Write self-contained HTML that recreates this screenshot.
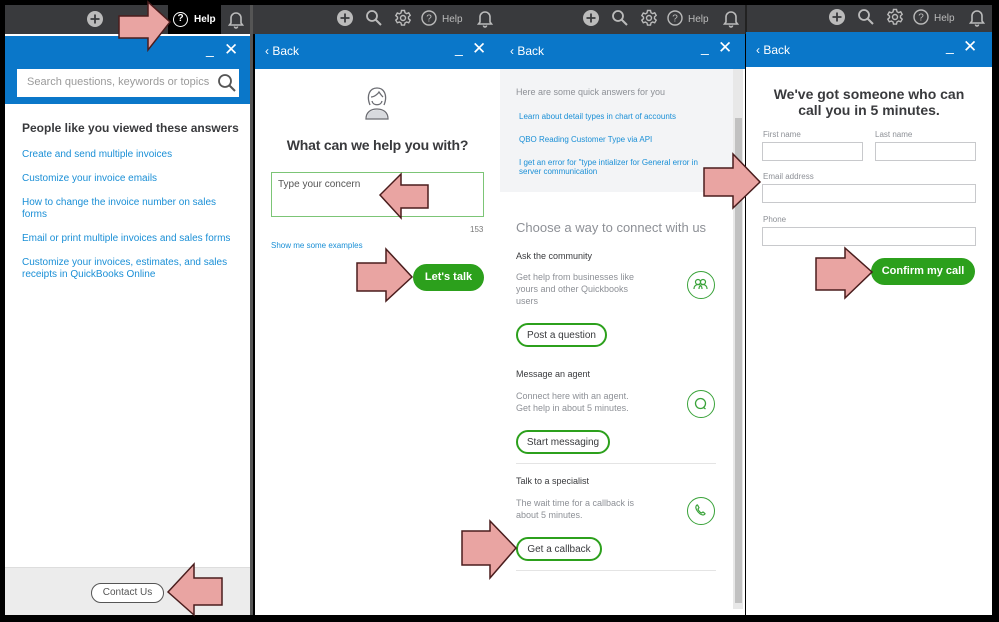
<!DOCTYPE html>
<html><head><meta charset="utf-8"><style>
*{box-sizing:border-box;margin:0;padding:0}
body{width:999px;height:622px;background:#000;position:relative;overflow:hidden;font-family:"Liberation Sans",sans-serif}
.a{position:absolute}
.top{background:#393a3d;height:29px;top:5px}
.blue{background:#0a77c9}
.pan{background:#fff;top:34px;height:581px}
.lnk{color:#1a8fd6;font-size:10px;position:absolute}
.gray{color:#8d9096}
.btn{position:absolute;border:2px solid #2ca01c;border-radius:13px;font-size:10px;color:#393a3d;background:#fff;display:flex;align-items:center;justify-content:center}
.circ{position:absolute;width:28px;height:28px;border:1.5px solid #3aa33a;border-radius:50%}
.inp{position:absolute;border:1px solid #c8c9cc;height:19px;background:#fff}
.lbl{position:absolute;font-size:8px;color:#8d9096}
.hd{color:#fff;font-size:12px;position:absolute}
</style></head><body>
<svg width="0" height="0" style="position:absolute"><defs>
<g id="plus"><circle cx="9" cy="9" r="8" fill="#bbb"/><path d="M9 4.5V13.5M4.5 9H13.5" stroke="#393a3d" stroke-width="1.8"/></g>
<g id="mag"><circle cx="7" cy="7" r="5" fill="none" stroke="#bbb" stroke-width="1.8"/><path d="M10.5 10.5L16 16" stroke="#bbb" stroke-width="2"/></g>
<g id="gear" fill="none" stroke="#bbb" stroke-width="1.4"><circle cx="9" cy="9" r="2.5"/><path d="M7.5 1.5h3l.5 2.2 1.6.9 2.1-.8 1.5 2.6-1.7 1.5v1.8l1.7 1.5-1.5 2.6-2.1-.8-1.6.9-.5 2.2h-3l-.5-2.2-1.6-.9-2.1.8-1.5-2.6 1.7-1.5V8.1L1.8 6.6l1.5-2.6 2.1.8 1.6-.9z"/></g>
<g id="bell" fill="none" stroke="#bbb" stroke-width="1.6"><path d="M4 13V8a5 5 0 0 1 10 0v5l1.5 2h-13z"/><path d="M7.5 16.5a1.5 1.5 0 0 0 3 0"/></g>
<g id="q"><circle cx="8" cy="8" r="7" fill="none" stroke="#bbb" stroke-width="1.4"/><text x="8" y="11.5" font-size="10" text-anchor="middle" fill="#bbb" font-family="Liberation Sans">?</text></g>
</defs></svg>
<!-- top bars -->
<div class="a top" style="left:5px;width:245px"></div>
<div class="a" style="left:168px;top:5px;width:53px;height:29px;background:#000"></div>
<div class="a top" style="left:253px;width:992px"></div>
<div class="a" style="left:250px;top:5px;width:3px;height:610px;background:#555"></div>
<div class="a" style="left:745px;top:5px;width:2px;height:29px;background:#222"></div>
<div class="a" style="left:992px;top:0;width:7px;height:622px;background:#000"></div>

<!-- panel 1 -->
<div class="a pan" style="left:5px;width:245px"></div>
<div class="a blue" style="left:5px;top:36px;width:245px;height:68px"></div>
<div class="a" style="left:17px;top:69px;width:222px;height:28px;background:#fff"></div>
<div class="a" style="left:27px;top:76px;font-size:11px;color:#9a9a9a">Search questions, keywords or topics</div>
<svg class="a" style="left:216px;top:72px" width="22" height="22"><circle cx="9" cy="9" r="6" fill="none" stroke="#555" stroke-width="1.8"/><line x1="13.5" y1="13.5" x2="19" y2="19" stroke="#555" stroke-width="2"/></svg>
<div class="hd" style="left:206px;top:41px;font-size:14px">_</div><div class="hd" style="left:224px;top:40px;font-size:17px">✕</div>
<div class="a" style="left:22px;top:121px;font-size:12px;font-weight:bold;color:#393a3d">People like you viewed these answers</div>
<div class="lnk" style="left:22px;top:149px">Create and send multiple invoices</div>
<div class="lnk" style="left:22px;top:173px">Customize your invoice emails</div>
<div class="lnk" style="left:22px;top:197px;width:200px;line-height:12px">How to change the invoice number on sales forms</div>
<div class="lnk" style="left:22px;top:233px">Email or print multiple invoices and sales forms</div>
<div class="lnk" style="left:22px;top:257px;width:222px;line-height:12px">Customize your invoices, estimates, and sales receipts in QuickBooks Online</div>
<div class="a" style="left:5px;top:567px;width:245px;height:48px;background:#ececec;border-top:1px solid #ddd"></div>
<div class="a" style="left:91px;top:583px;width:73px;height:20px;border:1.5px solid #555;border-radius:10px;background:#fff;font-size:10px;color:#555;text-align:center;line-height:17px">Contact Us</div>
<svg class="a" style="left:86px;top:10px" width="18" height="18"><use href="#plus"/></svg>
<div class="a" style="left:173px;top:12px;width:15px;height:15px;border:1.5px solid #fff;border-radius:50%;color:#fff;font-size:10px;text-align:center;line-height:12px;font-weight:bold">?</div>
<div class="a" style="left:194px;top:14px;color:#fff;font-size:10px;font-weight:bold">Help</div>
<svg class="a" style="left:227px;top:10px" width="18" height="19"><use href="#bell"/></svg>

<!-- top icons panels 2-4 -->
<svg class="a" style="left:336px;top:9px" width="160" height="20"><use href="#plus"/><use href="#mag" x="29"/><use href="#gear" x="58"/><use href="#q" x="85" y="1"/><text x="106" y="13" font-size="10" fill="#bbb" font-family="Liberation Sans">Help</text><use href="#bell" x="140"/></svg>
<svg class="a" style="left:582px;top:9px" width="160" height="20"><use href="#plus"/><use href="#mag" x="29"/><use href="#gear" x="58"/><use href="#q" x="85" y="1"/><text x="106" y="13" font-size="10" fill="#bbb" font-family="Liberation Sans">Help</text><use href="#bell" x="140"/></svg>
<svg class="a" style="left:828px;top:8px" width="160" height="20"><use href="#plus"/><use href="#mag" x="29"/><use href="#gear" x="58"/><use href="#q" x="85" y="1"/><text x="106" y="13" font-size="10" fill="#bbb" font-family="Liberation Sans">Help</text><use href="#bell" x="140"/></svg>

<!-- panel 2 -->
<div class="a pan" style="left:255px;width:245px"></div>
<div class="a blue" style="left:255px;top:34px;width:245px;height:35px"></div>
<div class="hd" style="left:265px;top:44px">‹ Back</div><div class="hd" style="left:455px;top:40px;font-size:14px">_</div><div class="hd" style="left:472px;top:39px;font-size:17px">✕</div>
<svg class="a" style="left:362px;top:85px" width="30" height="36"><path d="M5 34C5 28 9 25 15 25C21 25 25 28 25 34Z" fill="#d8dade"/><path d="M8 20 C4 10 8 3 15 3 C22 3 26 10 22 20 M9 12 C12 12 16 9 17 7 C19 10 21 12 21 12 M10 16 C11 21 19 21 20 16 M4 34 C4 27 9 24 15 24 C21 24 26 27 26 34 Z" fill="none" stroke="#6b6c72" stroke-width="1.3"/></svg>
<div class="a" style="left:255px;top:137px;width:245px;text-align:center;font-size:14px;color:#393a3d;font-weight:bold;letter-spacing:-.2px">What can we help you with?</div>
<div class="a" style="left:271px;top:172px;width:213px;height:45px;border:1.5px solid #7cc576"></div>
<div class="a" style="left:278px;top:179px;font-size:10px;color:#555">Type your concern</div>
<div class="a" style="left:470px;top:225px;font-size:8px;color:#777">153</div>
<div class="a" style="left:271px;top:241px;font-size:8px;color:#1a8fd6">Show me some examples</div>
<div class="a" style="left:413px;top:264px;width:71px;height:27px;background:#2ca01c;border-radius:14px;color:#fff;font-size:11px;font-weight:bold;text-align:center;line-height:27px">Let's talk</div>

<!-- panel 3 -->
<div class="a pan" style="left:500px;width:245px"></div>
<div class="a blue" style="left:500px;top:34px;width:245px;height:35px"></div>
<div class="hd" style="left:510px;top:44px">‹ Back</div><div class="hd" style="left:701px;top:39px;font-size:14px">_</div><div class="hd" style="left:718px;top:38px;font-size:17px">✕</div>
<div class="a" style="left:500px;top:69px;width:233px;height:123px;background:#f3f4f6"></div>
<div class="a" style="left:733px;top:69px;width:10px;height:540px;background:#e8e8e8"></div>
<div class="a" style="left:735px;top:118px;width:7px;height:485px;background:#c1c1c1"></div>
<div class="a gray" style="left:516px;top:87px;font-size:9px">Here are some quick answers for you</div>
<div class="lnk" style="left:519px;top:112px;font-size:8px">Learn about detail types in chart of accounts</div>
<div class="lnk" style="left:519px;top:135px;font-size:8px">QBO Reading Customer Type via API</div>
<div class="lnk" style="left:519px;top:158px;font-size:8px;width:200px;line-height:9px">I get an error for "type intializer for General error in server communication</div>
<div class="a gray" style="left:516px;top:220px;font-size:13px">Choose a way to connect with us</div>
<div class="a" style="left:516px;top:251px;font-size:9px;color:#393a3d">Ask the community</div>
<div class="a gray" style="left:516px;top:271px;font-size:9px;width:130px;line-height:12px">Get help from businesses like yours and other Quickbooks users</div>
<div class="circ" style="left:687px;top:271px"><svg width="25" height="25"><g fill="none" stroke="#3aa33a" stroke-width="1.2"><circle cx="10" cy="10" r="2.5"/><circle cx="15" cy="10" r="2.5"/><path d="M6 17c0-3 2-4.5 4-4.5s4 1.5 4 4.5M11 17c0-3 2-4.5 4-4.5s4 1.5 4 4.5"/></g></svg></div>
<div class="btn" style="left:516px;top:323px;width:91px;height:24px">Post a question</div>
<div class="a" style="left:516px;top:369px;font-size:9px;color:#393a3d">Message an agent</div>
<div class="a gray" style="left:516px;top:390px;font-size:9px;line-height:12px">Connect here with an agent.<br>Get help in about 5 minutes.</div>
<div class="circ" style="left:687px;top:390px"><svg width="25" height="25"><circle cx="12.5" cy="12.5" r="5" fill="none" stroke="#3aa33a" stroke-width="1.3"/><path d="M15 16l2.5 2" stroke="#3aa33a" stroke-width="1.3"/></svg></div>
<div class="btn" style="left:516px;top:430px;width:94px;height:24px">Start messaging</div>
<div class="a" style="left:516px;top:463px;width:200px;height:1px;background:#e4e4e4"></div>
<div class="a" style="left:516px;top:476px;font-size:9px;color:#393a3d">Talk to a specialist</div>
<div class="a gray" style="left:516px;top:497px;font-size:9px;line-height:12px">The wait time for a callback is<br>about 5 minutes.</div>
<div class="circ" style="left:687px;top:497px"><svg width="25" height="25"><path d="M9 7c-1.5 1-1.5 3 0 5.5s4 4.5 6 4.5c1 0 2-.7 2-1.5l-2-1.5-1.5 1c-1.5-.5-3-2.5-3.5-4l1-1.3L9.5 7z" fill="none" stroke="#3aa33a" stroke-width="1.2"/></svg></div>
<div class="btn" style="left:516px;top:537px;width:86px;height:24px">Get a callback</div>
<div class="a" style="left:516px;top:570px;width:200px;height:1px;background:#e4e4e4"></div>

<!-- panel 4 -->
<div class="a pan" style="left:746px;width:246px"></div>
<div class="a blue" style="left:746px;top:32px;width:246px;height:35px"></div>
<div class="hd" style="left:756px;top:43px">‹ Back</div><div class="hd" style="left:946px;top:38px;font-size:14px">_</div><div class="hd" style="left:963px;top:37px;font-size:17px">✕</div>
<div class="a" style="left:746px;top:86px;width:246px;text-align:center;font-size:14px;font-weight:bold;color:#393a3d;line-height:16px">We've got someone who can<br>call you in 5 minutes.</div>
<div class="lbl" style="left:763px;top:130px">First name</div><div class="lbl" style="left:875px;top:130px">Last name</div>
<div class="inp" style="left:762px;top:142px;width:101px"></div><div class="inp" style="left:875px;top:142px;width:101px"></div>
<div class="lbl" style="left:763px;top:172px">Email address</div>
<div class="inp" style="left:762px;top:184px;width:214px"></div>
<div class="lbl" style="left:763px;top:215px">Phone</div>
<div class="inp" style="left:762px;top:227px;width:214px"></div>
<div class="a" style="left:871px;top:258px;width:104px;height:27px;background:#2ca01c;border-radius:14px;color:#fff;font-size:11px;font-weight:bold;text-align:center;line-height:27px">Confirm my call</div>

<!-- arrows -->
<svg class="a" style="left:0;top:0" width="999" height="622">
<g fill="#e9a4a2" stroke="#4a1d1d" stroke-width="1.5">
<polygon points="119,16 148,16 148,2 170,22 148,50 148,38 119,38"/>
<polygon points="380,195 401,174 401,185 428,185 428,208 401,208 401,218"/>
<polygon points="357,263 386,263 386,249 412,277 386,301 386,291 357,291"/>
<polygon points="704,168 733,168 733,154 760,182 733,208 733,196 704,196"/>
<polygon points="816,258 845,258 845,248 872,272 845,298 845,290 816,290"/>
<polygon points="462,531 490,531 490,521 516,548 490,578 490,565 462,565"/>
<polygon points="168,592 194,564 194,578 222,578 222,605 194,605 194,615"/>
</g></svg>
</body></html>
